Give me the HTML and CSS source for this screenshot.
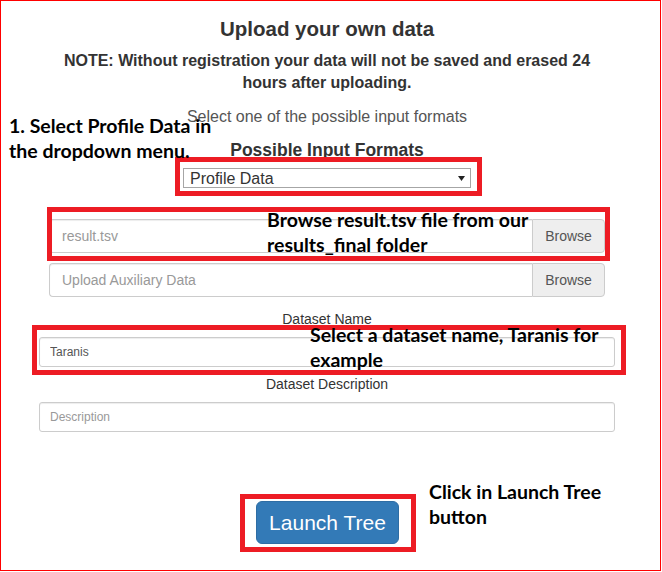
FILE: index.html
```html
<!DOCTYPE html>
<html lang="en">
<head>
<meta charset="utf-8">
<title>Upload your own data</title>
<link rel="stylesheet" href="styles.css">
</head>
<body>
<div class="frame">
  <div class="form">
    <h3 class="title">Upload your own data</h3>
    <p class="note">NOTE: Without registration your data will not be saved and erased 24 hours after uploading.</p>
    <p class="hint">Select one of the possible input formats</p>
    <h4 class="formats-label">Possible Input Formats</h4>
    <div class="select-wrap">
      <div class="select">Profile Data</div>
      <svg class="select-arrow" width="7" height="5" viewBox="0 0 7 5"><path d="M0 0H7L3.5 5Z" fill="#222"/></svg>
    </div>
    <div class="input-group first">
      <input class="file-input" type="text" placeholder="result.tsv">
      <span class="addon">Browse</span>
    </div>
    <div class="input-group second">
      <input class="file-input" type="text" placeholder="Upload Auxiliary Data">
      <span class="addon">Browse</span>
    </div>
    <label class="field-label name-label">Dataset Name</label>
    <input class="small-input" type="text" value="Taranis">
    <label class="field-label desc-label">Dataset Description</label>
    <input class="small-input" type="text" placeholder="Description">
    <div class="actions">
      <button class="btn-launch" type="button">Launch Tree</button>
    </div>
  </div>

  <div class="mark mark-select"></div>
  <div class="mark mark-browse"></div>
  <div class="mark mark-name"></div>
  <div class="mark mark-launch"></div>

  <div class="note-ann ann-1">1. Select Profile Data in<br>the dropdown menu.</div>
  <div class="note-ann ann-2">Browse result.tsv file from our<br>results_final folder</div>
  <div class="note-ann ann-3">Select a dataset name, Taranis for<br>example</div>
  <div class="note-ann ann-4">Click in Launch Tree<br>button</div>
</div>
</body>
</html>
```

FILE: styles.css
```css
* { box-sizing: border-box; }

html, body {
  margin: 0;
  padding: 0;
  background: #ffffff;
}

body {
  font-family: "Liberation Sans", Arial, sans-serif;
  color: #333333;
}

.frame {
  position: relative;
  width: 661px;
  height: 571px;
  border: 1px solid #ff0000;
  background: #ffffff;
  padding-top: 16px;
}

.form {
  width: 576px;
  margin-left: 38px;
  display: flex;
  flex-direction: column;
  align-items: stretch;
}

.title {
  margin: 0;
  font-size: 20.5px;
  line-height: 24px;
  font-weight: bold;
  text-align: center;
  color: #333333;
}

.note {
  margin: 9px auto 0;
  width: 560px;
  font-size: 16px;
  line-height: 22px;
  font-weight: bold;
  text-align: center;
  color: #333333;
}

.hint {
  margin: 13px 0 0;
  font-size: 16px;
  line-height: 20px;
  text-align: center;
  color: #555555;
}

.formats-label {
  margin: 13px 0 0;
  font-size: 17.5px;
  line-height: 20px;
  font-weight: bold;
  text-align: center;
  color: #333333;
}

.select-wrap {
  position: relative;
  width: 288px;
  height: 20px;
  margin: 8px auto 0;
}

.select {
  height: 20px;
  padding: 0 0 0 6px;
  border: 1px solid #a6a6a6;
  background: #ffffff;
  font-size: 16px;
  line-height: 19px;
  color: #333333;
}

.select-arrow {
  position: absolute;
  right: 6px;
  top: 8px;
}

.input-group {
  display: flex;
  height: 34px;
  margin: 0 10px;
}

.input-group.first { margin-top: 31px; }
.input-group.second { margin-top: 10px; }

.file-input {
  flex: 1;
  min-width: 0;
  height: 34px;
  margin: 0;
  padding: 0 12px;
  border: 1px solid #cccccc;
  border-right: 0;
  border-radius: 4px 0 0 4px;
  box-shadow: inset 0 1px 1px rgba(0, 0, 0, 0.075);
  font-family: "Liberation Sans", Arial, sans-serif;
  font-size: 14px;
  color: #555555;
  background: #ffffff;
}

.file-input::placeholder { color: #999999; }

.addon {
  width: 73px;
  display: flex;
  align-items: center;
  justify-content: center;
  border: 1px solid #cccccc;
  border-radius: 0 4px 4px 0;
  background: #eeeeee;
  font-size: 14px;
  color: #555555;
}

.field-label {
  display: block;
  font-size: 14px;
  line-height: 20px;
  text-align: center;
  color: #333333;
}

.name-label { margin-top: 12px; }
.desc-label { margin-top: 7px; }

.small-input {
  display: block;
  width: 100%;
  height: 30px;
  margin: 8px 0 0;
  padding: 0 10px;
  border: 1px solid #cccccc;
  border-radius: 3px;
  box-shadow: inset 0 1px 1px rgba(0, 0, 0, 0.075);
  font-family: "Liberation Sans", Arial, sans-serif;
  font-size: 12px;
  color: #555555;
  background: #ffffff;
}

.small-input::placeholder { color: #999999; }

.actions {
  display: flex;
  justify-content: center;
  margin-top: 69px;
  padding-left: 1px;
}

.btn-launch {
  height: 43px;
  padding: 0 12px;
  border: 1px solid #2e6da4;
  border-radius: 6px;
  background: #337ab7;
  color: #ffffff;
  font-family: "Liberation Sans", Arial, sans-serif;
  font-size: 21px;
  line-height: 25px;
}

/* annotation overlays */
.mark {
  position: absolute;
  border: 5px solid #ed1c24;
}

.mark-select { left: 174px; top: 156px; width: 307px; height: 39px; }
.mark-browse { left: 46px; top: 206px; width: 563px; height: 54px; }
.mark-name { left: 31px; top: 324px; width: 594px; height: 50px; }
.mark-launch { left: 239px; top: 493px; width: 176px; height: 58px; }

.note-ann {
  position: absolute;
  font-family: Lato, "Open Sans", sans-serif;
  font-weight: bold;
  font-size: 19.5px;
  line-height: 25px;
  color: #000000;
  white-space: nowrap;
}

.ann-1 { left: 8px; top: 112px; }
.ann-2 { left: 266px; top: 206px; }
.ann-3 { left: 309px; top: 321px; }
.ann-4 { left: 428px; top: 478px; }
```
